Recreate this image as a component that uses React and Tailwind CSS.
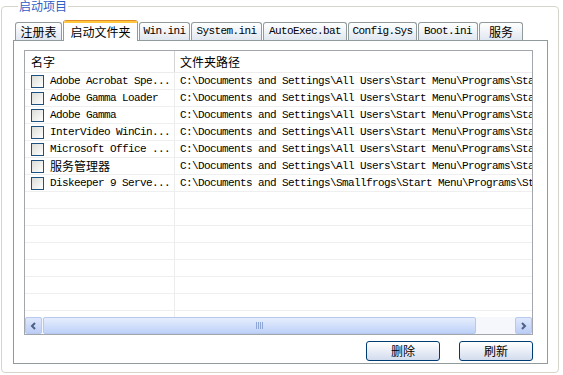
import React from 'react';

const mono = "font-['Liberation_Mono','Noto_Sans_CJK_SC',monospace]";
const cjk = "font-['Noto_Sans_CJK_SC','Liberation_Sans',sans-serif]";

const tabs = [
  { label: '注册表', w: 'w-[47px]', cn: true },
  { label: '启动文件夹', w: 'w-[75px]', cn: true, active: true },
  { label: 'Win.ini', w: 'w-[51px]' },
  { label: 'System.ini', w: 'w-[71px]' },
  { label: 'AutoExec.bat', w: 'w-[84px]' },
  { label: 'Config.Sys', w: 'w-[69px]' },
  { label: 'Boot.ini', w: 'w-[60px]' },
  { label: '服务', w: 'w-[44px]', cn: true },
];

const allUsers = 'C:\\Documents and Settings\\All Users\\Start Menu\\Programs\\Startup';

// startup items
const items = [
  { name: 'Adobe Acrobat Spe...', path: allUsers },
  { name: 'Adobe Gamma Loader', path: allUsers },
  { name: 'Adobe Gamma', path: allUsers },
  { name: 'InterVideo WinCin...', path: allUsers },
  { name: 'Microsoft Office ...', path: allUsers },
  { name: '服务管理器', path: allUsers, cn: true },
  { name: 'Diskeeper 9 Serve...', path: 'C:\\Documents and Settings\\Smallfrogs\\Start Menu\\Programs\\Startup' },
];

const rows = [...items, ...Array(8).fill(null)];

const Arrow = ({ dir }) => (
  <svg width="7" height="8" viewBox="0 0 7 8">
    {dir === 'left' ? (
      <path d="M5 1 L2 4 L5 7" fill="none" stroke="#4d6185" strokeWidth="2" />
    ) : (
      <path d="M2 1 L5 4 L2 7" fill="none" stroke="#4d6185" strokeWidth="2" />
    )}
  </svg>
);

const ScrollButton = ({ dir }) => (
  <div className="w-[17px] h-[17px] flex items-center justify-center rounded-[2px] border border-[#b8c9f0] bg-linear-to-b from-[#dfe8fd] to-[#bccdf5]">
    <Arrow dir={dir} />
  </div>
);

const App = () => {
  return (
    <div className="w-[563px] h-[375px] bg-white text-black overflow-hidden">
      <fieldset className="ml-[1px] w-[558px] h-[373px] border border-[#d5d5cc] rounded-[4px] pl-[11px] pt-[8px]">
        <legend className={`ml-[5px] px-[1px] text-[12px] leading-[12px] text-[#2f5fc4] ${cjk}`}>启动项目</legend>

        {/* Tab strip */}
        <div className="flex items-end h-[20px] pl-[2px] gap-[1px]">
          {tabs.map((t) =>
            t.active ? (
              <div
                key={t.label}
                className={`${t.w} h-[21px] -mb-px relative z-10 bg-white border-x border-[#919b9c] rounded-t-[3px] overflow-hidden`}
              >
                <div className="h-[1px] bg-[#e68b2c]" />
                <div className="h-[2px] bg-[#ffc83c]" />
                <div className={`h-[17px] flex items-center justify-center text-[12px] leading-none ${cjk}`}>{t.label}</div>
              </div>
            ) : (
              <div
                key={t.label}
                className={`${t.w} h-[18px] flex items-center justify-center border-x border-t border-[#919b9c] rounded-t-[3px] bg-linear-to-b from-white to-[#e1e7f0] leading-none ${
                  t.cn ? `text-[12px] ${cjk}` : `text-[11px] tracking-[-0.6px] ${mono}`
                }`}
              >
                {t.label}
              </div>
            )
          )}
        </div>

        {/* Tab panel */}
        <div className="w-[535px] h-[324px] border border-[#919b9c] bg-white pl-[10px] pt-[9px]">
          <div className="w-[509px] h-[285px] border border-[#a3a6ab] flex flex-col">
            {/* Header */}
            <div className="h-[22px] flex border-b border-[#ececec] shrink-0">
              <div className={`w-[150px] pl-[6px] flex items-center border-r border-[#d4d4d4] text-[12px] ${cjk}`}>名字</div>
              <div className={`flex-1 pl-[5px] flex items-center text-[12px] ${cjk}`}>文件夹路径</div>
            </div>

            {/* Rows */}
            <div className="flex-1 overflow-hidden">
              {rows.map((r, i) => (
                <div key={i} className="h-[17px] flex border-b border-[#efefef]">
                  <div className="w-[150px] shrink-0 pl-[6px] flex items-center gap-[6px] border-r border-[#ececec]">
                    {r && (
                      <>
                        <div className="w-[13px] h-[13px] shrink-0 border border-[#1c5180] bg-linear-to-br from-[#dcdcd7] to-white" />
                        {r.cn ? (
                          <span className={`text-[12px] leading-none ${cjk}`}>{r.name}</span>
                        ) : (
                          <span className={`text-[11px] leading-none tracking-[-0.6px] whitespace-nowrap ${mono}`}>{r.name}</span>
                        )}
                      </>
                    )}
                  </div>
                  <div className="flex-1 min-w-0 pl-[5px] flex items-center overflow-hidden">
                    {r && (
                      <span className={`text-[11px] leading-none tracking-[-0.6px] whitespace-nowrap ${mono}`}>{r.path}</span>
                    )}
                  </div>
                </div>
              ))}
            </div>

            {/* Horizontal scrollbar */}
            <div className="h-[17px] shrink-0 flex bg-[#f5f7fd]">
              <ScrollButton dir="left" />
              <div className="w-[433px] h-[17px] ml-[1px] flex items-center justify-center gap-[1px] rounded-[2px] border border-[#b7c8ee] bg-linear-to-b from-[#e6eefd] to-[#bed1f8]">
                {[0, 1, 2, 3].map((g) => (
                  <div key={g} className="w-[1px] h-[7px] bg-[#8ea6d6]" />
                ))}
              </div>
              <div className="flex-1" />
              <ScrollButton dir="right" />
            </div>
          </div>

          {/* Buttons */}
          <div className="w-[509px] mt-[6px] flex justify-end gap-[19px]">
            {['删除', '刷新'].map((b) => (
              <button
                key={b}
                className={`w-[74px] h-[20px] rounded-[3px] border border-[#003c74] bg-linear-to-b from-white to-[#d3dced] text-[12px] leading-none ${cjk}`}
              >
                {b}
              </button>
            ))}
          </div>
        </div>
      </fieldset>
    </div>
  );
};

export default App;
